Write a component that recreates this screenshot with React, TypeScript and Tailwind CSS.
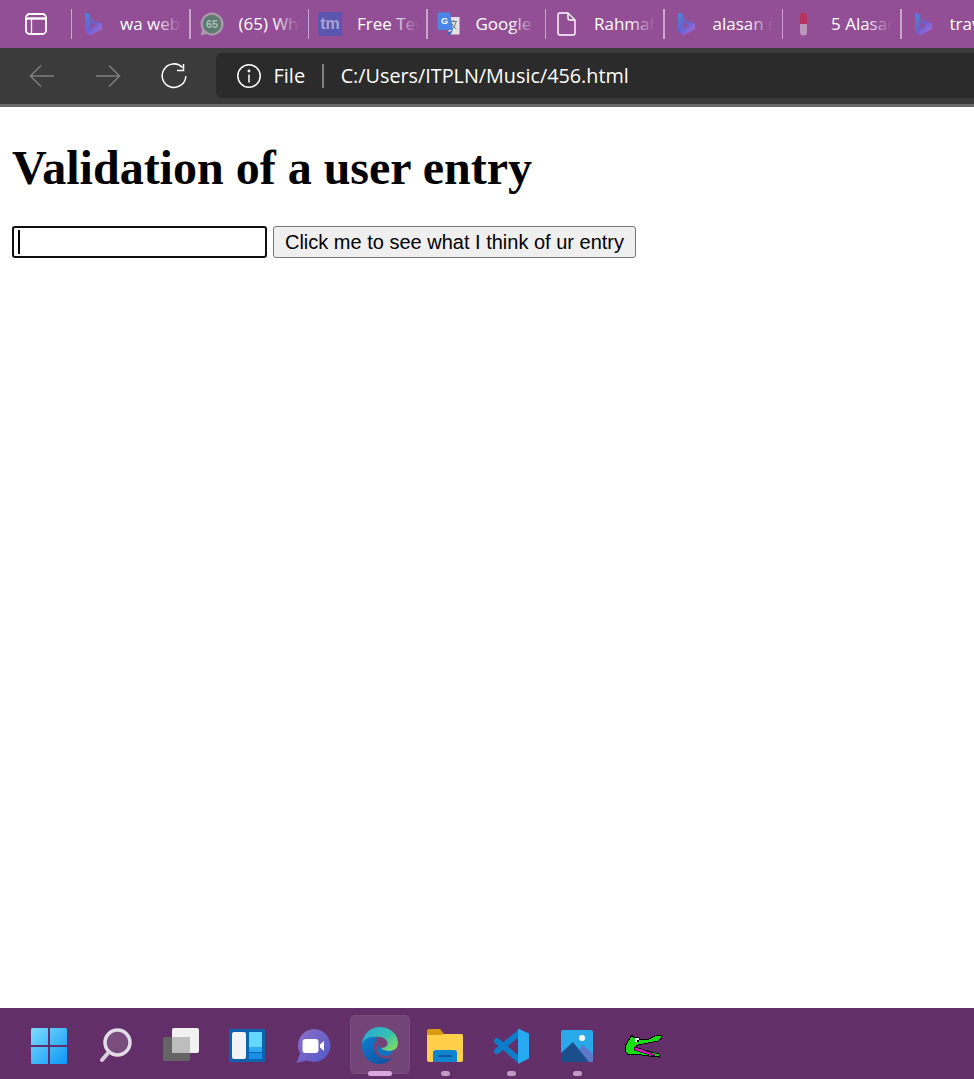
import React from 'react';

const tabs = [
  { title: 'wa web', icon: 'bing' },
  { title: '(65) Whats', icon: 'wa' },
  { title: 'Free Templates', icon: 'tm' },
  { title: 'Google Tr', icon: 'translate' },
  { title: 'Rahmah i', icon: 'file' },
  { title: 'alasan mengapa', icon: 'bing' },
  { title: '5 Alasan', icon: 'pill' },
  { title: 'travel', icon: 'bing' },
];

function BingIcon({ id }: { id: string }) {
  return (
    <svg width="24" height="24" viewBox="0 0 24 24">
      <defs>
        <linearGradient id={id} x1="0" y1="0" x2="0.700" y2="1">
          <stop offset="0" stopColor="#4a86d8" />
          <stop offset="0.600" stopColor="#6a5fd0" />
          <stop offset="1" stopColor="#a06cd8" />
        </linearGradient>
      </defs>
      <path d="M4 0.500l5.500 2v14l5.500-3-3.500-1.700-1.700-4.300L21 11.500V17L9.500 23.500 4 20z" fill={`url(#${id})`} />
    </svg>
  );
}

function TabIcon({ icon, id }: { icon: string; id: string }) {
  if (icon === 'bing') return <BingIcon id={id} />;
  if (icon === 'wa') {
    return (
      <svg width="24" height="24" viewBox="0 0 24 24">
        <path d="M12 0.500a11.500 11.500 0 1 1-5.600 21.500L0.500 23.500l1.700-5.600A11.500 11.500 0 0 1 12 0.500z" fill="#a99aa8" />
        <circle cx="12" cy="12" r="9.200" fill="#5b7a72" />
        <text x="12" y="16" textAnchor="middle" fontSize="11" fontWeight="700" fill="#a9bdb6" fontFamily="Liberation Sans, sans-serif">65</text>
      </svg>
    );
  }
  if (icon === 'tm') {
    return (
      <div className="flex h-6 w-6 items-center justify-center bg-[#5a55ae] font-['Liberation_Sans',sans-serif] text-[16px] font-bold text-[#a9a2d6]">
        tm
      </div>
    );
  }
  if (icon === 'translate') {
    return (
      <svg width="24" height="24" viewBox="0 0 24 24">
        <path d="M10 5h12.500v17.500H12z" fill="#e4e2e6" />
        <path d="M13 9.500h7M16.500 8v1.500M14.500 17c2.500-1.500 4-4 4.500-7.500M15 11.500c1 2.500 2.500 4.500 4.500 5.500" stroke="#777" strokeWidth="1" fill="none" />
        <path d="M2 0.500h11l3 17.500H2a1.500 1.500 0 0 1-1.500-1.500V2A1.500 1.500 0 0 1 2 0.500z" fill="#4a86e8" />
        <path d="M10 21l3 2.500 3-5.500z" fill="#3a66c0" />
        <text x="7.500" y="12" textAnchor="middle" fontSize="9" fontWeight="700" fill="#fff" fontFamily="Liberation Sans, sans-serif">G</text>
      </svg>
    );
  }
  if (icon === 'file') {
    return (
      <svg width="24" height="24" viewBox="0 0 24 24" fill="none" stroke="#fff" strokeWidth="1.400" strokeLinejoin="round">
        <path d="M3 2.800a1.800 1.800 0 0 1 1.800-1.800H13l7 7v13a2 2 0 0 1-2 2H5a2 2 0 0 1-2-2z" />
        <path d="M13 1v5a2 2 0 0 0 2 2h5" />
      </svg>
    );
  }
  return (
    <svg width="24" height="24" viewBox="0 0 24 24">
      <path d="M8 4a3.500 3.500 0 0 1 7 0v8H8z" fill="#b8325f" />
      <path d="M8 12h7v8a3.500 3.500 0 0 1-7 0z" fill="#b79ab8" />
    </svg>
  );
}

function Tab({ title, icon, id }: { title: string; icon: string; id: string }) {
  return (
    <div className="relative flex h-full w-[118.500px] shrink-0 items-center overflow-hidden">
      <div className="h-[30px] w-[1.500px] shrink-0 bg-[#c9a5cb]" />
      <div className="ml-[9px] flex w-6 shrink-0 items-center justify-center">
        <TabIcon icon={icon} id={id} />
      </div>
      <span className="ml-[15px] w-[62px] overflow-hidden whitespace-nowrap text-[17px] text-white">{title}</span>
      <div className="absolute left-[84px] top-0 h-full w-[26px] bg-linear-to-r from-transparent to-[#934f95]" />
      <div className="absolute left-[110px] top-0 h-full w-[9px] bg-[#934f95]" />
    </div>
  );
}

function TabBar() {
  return (
    <div className="flex h-12 shrink-0 items-center overflow-hidden bg-[#934f95] pb-[1px]">
      <div className="flex w-[70.500px] shrink-0 justify-center pl-[1px]">
        <svg width="22" height="22" viewBox="0 0 22 22" fill="none" stroke="#fff" strokeWidth="1.800">
          <rect x="1" y="1" width="20" height="20" rx="3.500" />
          <path d="M1 5.500h20" strokeWidth="2.400" />
          <path d="M6.500 6.500V21" strokeWidth="1.300" />
        </svg>
      </div>
      {tabs.map((t, i) => (
        <Tab key={i} title={t.title} icon={t.icon} id={`bing-${i}`} />
      ))}
    </div>
  );
}

function Toolbar() {
  return (
    <div className="flex h-[59px] shrink-0 items-center border-b-[3px] border-[#6a6a6a] bg-[#3b3b3b] pb-[1px]">
      <div className="flex w-[216px] shrink-0 items-center pl-[9px]">
        <div className="flex w-[66px] justify-center">
          <svg width="26" height="24" viewBox="0 0 26 24" fill="none" stroke="#7f7f7f" strokeWidth="1.500">
            <path d="M25 12H1.500M12 1.500 1.500 12 12 22.500" />
          </svg>
        </div>
        <div className="flex w-[66px] justify-center">
          <svg width="26" height="24" viewBox="0 0 26 24" fill="none" stroke="#7f7f7f" strokeWidth="1.500">
            <path d="M1 12h23.500M14 1.500 24.500 12 14 22.500" />
          </svg>
        </div>
        <div className="flex w-[66px] justify-center">
          <svg width="26" height="26" viewBox="0 0 26 26" fill="none" stroke="#fff" strokeWidth="1.500">
            <path d="M21.500 4.500A11.800 11.800 0 1 0 24.800 13" />
            <path d="M22.500 1v6.500H16" />
          </svg>
        </div>
      </div>
      <div className="flex h-[45px] flex-1 items-center rounded-l-[6px] bg-[#2b2b2b] pl-[21px] text-[20px] text-white">
        <svg width="24" height="24" viewBox="0 0 24 24" fill="none" stroke="#fff" strokeWidth="1.500">
          <circle cx="12" cy="12" r="11.200" />
          <path d="M12 10.500v8" />
          <circle cx="12" cy="7" r="0.700" fill="#fff" />
        </svg>
        <span className="ml-[12.500px] pt-[1px]">File</span>
        <div className="ml-[17px] h-[24px] w-[1.500px] bg-[#808080]" />
        <span className="ml-[17px] pt-[1px] text-[19.800px]">C:/Users/ITPLN/Music/456.html</span>
      </div>
    </div>
  );
}

function Slot({ children, active, dot }: { children: React.ReactNode; active?: boolean; dot?: boolean }) {
  return (
    <div className="relative flex h-[60px] w-[66px] shrink-0 items-center justify-center">
      {active && <div className="absolute left-[4px] top-0 h-[59px] w-[60px] rounded-[5px] border border-white/5 bg-white/10" />}
      <div className="relative mt-[1px] flex">{children}</div>
      {active && <div className="absolute bottom-[-1px] left-[22px] h-[5px] w-[24px] rounded-full bg-[#dba8de]" />}
      {dot && <div className="absolute bottom-[-1px] left-[29px] h-[5px] w-[9px] rounded-full bg-[#c09cc4]" />}
    </div>
  );
}

function Taskbar() {
  return (
    <div className="flex h-[71px] shrink-0 items-start bg-[#622f69] pl-[16px] pt-[7px]">
      <Slot>
        <svg width="36" height="36" viewBox="0 0 36 36">
          <defs>
            <linearGradient id="win" x1="0" y1="0" x2="1" y2="1">
              <stop offset="0" stopColor="#7fdcff" />
              <stop offset="1" stopColor="#0a96f5" />
            </linearGradient>
          </defs>
          <path d="M1.500 0H17v17H0V1.500A1.500 1.500 0 0 1 1.500 0zM19 0h15.500A1.500 1.500 0 0 1 36 1.500V17H19zM0 19h17v17H1.500A1.500 1.500 0 0 1 0 34.500zM19 19h17v15.500a1.500 1.500 0 0 1-1.500 1.500H19z" fill="url(#win)" />
        </svg>
      </Slot>
      <Slot>
        <svg width="34" height="36" viewBox="0 0 34 36" fill="none">
          <circle cx="19.500" cy="14.500" r="12.500" stroke="#e4dce6" strokeWidth="3.500" fill="#ffffff" fillOpacity="0.150" />
          <path d="M10 25 4 32" stroke="#d8d0da" strokeWidth="4" strokeLinecap="round" />
        </svg>
      </Slot>
      <Slot>
        <svg width="38" height="36" viewBox="0 0 38 36">
          <rect x="10" y="0" width="27" height="25" rx="2" fill="#f2f2f2" />
          <rect x="1" y="9" width="27" height="24" rx="2" fill="#646464" />
          <rect x="10" y="9" width="18" height="16" fill="#bdbdbd" />
        </svg>
      </Slot>
      <Slot>
        <svg width="36" height="33" viewBox="0 0 36 33">
          <rect width="36" height="33" fill="#0f62ad" />
          <rect x="3" y="3" width="14" height="27" rx="2" fill="#f3f3f3" />
          <rect x="20" y="3" width="13" height="15" fill="#66d8ff" />
          <rect x="20" y="18" width="13" height="5" fill="#2fa8f5" />
          <rect x="20" y="24" width="13" height="6" fill="#1b8fe6" />
        </svg>
      </Slot>
      <Slot>
        <svg width="36" height="36" viewBox="0 0 36 36">
          <defs>
            <linearGradient id="teams" x1="0" y1="0" x2="1" y2="1">
              <stop offset="0" stopColor="#8f6fc8" />
              <stop offset="1" stopColor="#5058c8" />
            </linearGradient>
          </defs>
          <path d="M19 1a16.500 16.500 0 1 1-7 31.500L1.500 35 5 25.500A16.500 16.500 0 0 1 19 1z" fill="url(#teams)" />
          <rect x="7.500" y="11" width="16" height="14" rx="3" fill="#fff" />
          <path d="M25 16.500 29 13v10l-4-3.500z" fill="#fff" />
        </svg>
      </Slot>
      <Slot active>
        <svg width="37" height="37" viewBox="0 0 37 37">
          <defs>
            <linearGradient id="edgeTop" x1="0" y1="0" x2="1" y2="0.800">
              <stop offset="0" stopColor="#2aa4d8" />
              <stop offset="0.600" stopColor="#35c1b0" />
              <stop offset="1" stopColor="#7fdc60" />
            </linearGradient>
            <linearGradient id="edgeBottom" x1="0" y1="0" x2="0.800" y2="1">
              <stop offset="0" stopColor="#0f7fd0" />
              <stop offset="1" stopColor="#0f4fa0" />
            </linearGradient>
          </defs>
          <path d="M1 17C2 7 9 0 19 0c10 0 18 7 18 16 0 5-4 8-9 8-4 0-7-1-8-3 5 0 8-3 6-7-2-3-6-5-11-4C8 11 3 13 1 17z" fill="url(#edgeTop)" />
          <path d="M1 17c2-5 8-8 13-7 3 0 2 2 0 5-3 5-1 13 7 16 4 1.500 8 1 11-1-4 4.500-9 7-14 7C8 37 0 28 1 17z" fill="url(#edgeBottom)" />
          <path d="M20 21c1 2 4 3 8 3 2 0 4-.500 5-1.500-2 5-7 7.500-12 6-4-1.500-6-6-4-10 1 1 2 2 3 2.500z" fill="#1273c4" />
        </svg>
      </Slot>
      <Slot dot>
        <svg width="36" height="33" viewBox="0 0 36 33">
          <path d="M0 2a2 2 0 0 1 2-2h11l4 5h17a2 2 0 0 1 2 2v4H0z" fill="#d89a10" />
          <path d="M0 6h14l3-1h17a2 2 0 0 1 2 2v24a2 2 0 0 1-2 2H2a2 2 0 0 1-2-2z" fill="#ffcf4a" />
          <path d="M6 33V24a3 3 0 0 1 3-3h18a3 3 0 0 1 3 3v9z" fill="#1184d0" />
          <rect x="11" y="26" width="14" height="2" rx="1" fill="#0c5a98" />
        </svg>
      </Slot>
      <Slot dot>
        <svg width="36" height="36" viewBox="0 0 36 36" fill="none">
          <path d="M25 6 4 23M4 13l21 18" stroke="#0c7cc8" strokeWidth="6" strokeLinecap="round" />
          <path d="M25 0.500 36 5.500v25L25 36z" fill="#27a9f2" />
        </svg>
      </Slot>
      <Slot dot>
        <svg width="32" height="32" viewBox="0 0 32 32">
          <rect width="32" height="32" rx="2" fill="#29a9ea" />
          <circle cx="21" cy="8" r="3" fill="#fff" />
          <path d="M14 32 21 14l11 10v8z" fill="#5c78c8" />
          <path d="M0 32V23L12 12l16 20z" fill="#1c4e8c" />
        </svg>
      </Slot>
      <Slot>
        <svg width="37" height="24" viewBox="0 0 37 24" shapeRendering="crispEdges">
          <path d="M0 12 5 4l2-3 2 3 4-1 2 3 9-1 6-3 6-1 1 3-4 3-10 2-10 2-4 3 7 1 10 3 8 2v3l-10-1-14-2-7 1-3-5z" fill="#16e010" stroke="#000" strokeWidth="1" />
          <path d="M9 13l7 2 10 4 4 2-1 1-11-3-9-3z" fill="#e010c8" stroke="#000" strokeWidth="0.600" />
          <rect x="10" y="4" width="4" height="4" fill="#fff" />
          <rect x="12" y="6" width="2" height="2" fill="#000" />
        </svg>
      </Slot>
    </div>
  );
}

export default function App() {
  return (
    <div className="flex h-screen w-full flex-col overflow-hidden bg-white font-['Open_Sans',sans-serif]">
      <TabBar />
      <Toolbar />
      <main className="flex-1 px-3 pt-[33px] font-['Liberation_Serif',serif] text-black">
        <h1 className="text-[48px] font-bold leading-[55px]">Validation of a user entry</h1>
        <div className="mt-[31px] flex items-start gap-[6px]">
          <div className="flex h-8 w-[255px] items-center rounded-[3px] border-2 border-[#101010] bg-white pl-[4px]">
            <div className="h-[24px] w-[2px] bg-black" />
          </div>
          <button className="h-8 w-[363px] rounded-[3px] border border-[#767676] bg-[#efefef] font-['Liberation_Sans',sans-serif] text-[20px] text-black">
            Click me to see what I think of ur entry
          </button>
        </div>
      </main>
      <Taskbar />
    </div>
  );
}
